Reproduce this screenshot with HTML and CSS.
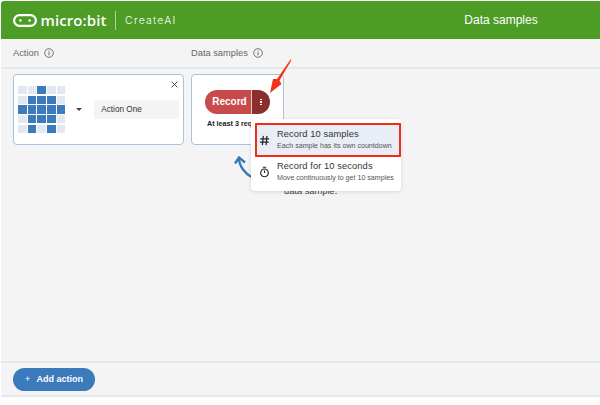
FILE: index.html
```html
<!DOCTYPE html>
<html lang="en">
<head>
<meta charset="utf-8">
<title>micro:bit CreateAI</title>
<link rel="stylesheet" href="styles.css">
</head>
<body>
<div class="app">
  <header class="topbar">
    <div class="brand">
      <svg class="logo-mark" viewBox="0 0 24 13" width="24" height="13" aria-hidden="true">
        <rect x="1.1" y="1.1" width="21.8" height="10.8" rx="5.4" fill="none" stroke="#fff" stroke-width="2.2"/>
        <circle cx="7.4" cy="6.5" r="1.2" fill="#fff"/>
        <circle cx="16.6" cy="6.5" r="1.2" fill="#fff"/>
      </svg>
      <span class="logo-text">micro:bit</span>
      <span class="brand-sep"></span>
      <span class="product">CreateAI</span>
    </div>
    <div class="page-title">Data samples</div>
  </header>

  <div class="columns-head">
    <div class="col-action">Action
      <svg class="info" viewBox="0 0 10 10" width="10" height="10" aria-hidden="true"><circle cx="5" cy="5" r="4.3" fill="none" stroke="#555" stroke-width=".8"/><rect x="4.55" y="4.3" width=".9" height="3" fill="#555"/><rect x="4.55" y="2.6" width=".9" height=".9" fill="#555"/></svg>
    </div>
    <div class="col-data">Data samples
      <svg class="info" viewBox="0 0 10 10" width="10" height="10" aria-hidden="true"><circle cx="5" cy="5" r="4.3" fill="none" stroke="#555" stroke-width=".8"/><rect x="4.55" y="4.3" width=".9" height="3" fill="#555"/><rect x="4.55" y="2.6" width=".9" height=".9" fill="#555"/></svg>
    </div>
  </div>

  <main class="content">
    <div class="row">
      <section class="card action-card">
        <div class="led-grid">
          <i></i><i></i><i class="on"></i><i></i><i></i>
          <i></i><i class="on"></i><i class="on"></i><i class="on"></i><i></i>
          <i class="on"></i><i class="on"></i><i class="on"></i><i class="on"></i><i class="on"></i>
          <i></i><i class="on"></i><i class="on"></i><i class="on"></i><i></i>
          <i></i><i class="on"></i><i></i><i class="on"></i><i></i>
        </div>
        <span class="caret"></span>
        <div class="name-input">Action One</div>
        <svg class="close" viewBox="0 0 8 8" width="7" height="7" aria-hidden="true"><path d="M.7.7l6.6 6.6M7.3.7L.7 7.3" stroke="#333" stroke-width="1" fill="none"/></svg>
      </section>
      <section class="card data-card">
        <div class="record-btn">
          <span class="record-main">Record</span>
          <span class="record-more"><b></b><b></b><b></b></span>
        </div>
        <div class="req">At least 3 required</div>
      </section>
    </div>

    <svg class="hint-arrow" viewBox="0 0 40 40" width="40" height="40" aria-hidden="true">
      <path d="M5 2 C5 10 11 18 19 22" fill="none" stroke="#3a7ab8" stroke-width="2.4"/>
      <path d="M1 7.5 L5 1.5 L11 6.5" fill="none" stroke="#3a7ab8" stroke-width="2.4"/>
    </svg>
    <div class="hint-text">data sample.</div>

    <div class="menu">
      <div class="menu-item selected">
        <svg class="menu-icon" viewBox="0 0 12 12" width="11" height="11" aria-hidden="true"><path d="M4.7 1L3.7 11M8.7 1L7.7 11M1.4 4.2H11M1 7.8H10.6" stroke="#222" stroke-width="1.3" fill="none"/></svg>
        <div><div class="menu-title">Record 10 samples</div><div class="menu-sub">Each sample has its own countdown</div></div>
      </div>
      <div class="menu-item">
        <svg class="menu-icon" viewBox="0 0 12 12" width="11" height="12" aria-hidden="true"><circle cx="6" cy="7" r="4.2" fill="none" stroke="#222" stroke-width="1.2"/><path d="M4.2.8H7.8M6 4.4V7" stroke="#222" stroke-width="1.2" fill="none"/></svg>
        <div><div class="menu-title">Record for 10 seconds</div><div class="menu-sub">Move continuously to get 10 samples</div></div>
      </div>
    </div>

    <svg class="red-arrow" viewBox="0 0 30 42" width="30" height="42" aria-hidden="true">
      <path d="M25.5 1 L13.5 21.5 L15.5 25 L4 34 L7 20 L11 20 L24.5 .5 Z" fill="#f4321a"/>
    </svg>
  </main>

  <footer class="actions-bar">
    <div class="add-btn"><span class="plus">+</span> Add action</div>
  </footer>
  <div class="bottom-strip"></div>
</div>
</body>
</html>
```
FILE: styles.css
```css
* { box-sizing: border-box; }
html, body { margin: 0; height: 100%; background: #fff; }
body { font-family: "Liberation Sans", Arial, sans-serif; overflow: hidden; }
.app { height: 405px; width: 600px; padding: 1px 0 0 1px; display: flex; flex-direction: column; background: #fff; }

.topbar { height: 38px; flex: none; background: #4c9c25; color: #fff; display: flex; align-items: center; border-radius: 3px 0 0 0; }
.brand { display: flex; align-items: center; width: 433px; padding-left: 12px; }
.logo-mark { flex: none; margin-right: 3.5px; }
.logo-text { font-family: "Open Sans", sans-serif; font-weight: 600; font-size: 15px; letter-spacing: .1px; line-height: 1; }
.brand-sep { width: 1px; height: 19px; background: rgba(255,255,255,.55); margin: 0 9.5px 0 8px; }
.product { font-family: "Inter", sans-serif; font-weight: 300; font-size: 10.5px; letter-spacing: 1.2px; }
.page-title { width: 134px; text-align: center; font-size: 12px; }

.columns-head { height: 30px; flex: none; background: #f4f4f4; border-bottom: 2px solid #e4e8ee; display: flex; align-items: center; padding: 0 0 1px 12px; font-size: 9.3px; color: #666; }
.col-action { width: 178px; display: flex; align-items: center; gap: 5px; }
.col-data { display: flex; align-items: center; gap: 5px; }

.content { flex: 1; background: #f4f4f4; position: relative; padding: 5px 0 0 12px; min-height: 0; }
.row { display: flex; gap: 7px; }
.card { height: 71px; background: #fff; border: 1px solid #a9c3dc; border-radius: 4px; position: relative; }
.action-card { width: 171px; display: flex; align-items: center; padding: 0 4px; }
.led-grid { display: grid; grid-template-columns: repeat(5, 8.5px); grid-auto-rows: 8.5px; gap: 1.2px; }
.led-grid i { background: #e3e8f0; display: block; }
.led-grid i.on { background: #3b7abb; }
.caret { width: 0; height: 0; border-left: 3px solid transparent; border-right: 3px solid transparent; border-top: 3px solid #444; margin: 0 12px 0 11px; }
.name-input { width: 85px; height: 19px; background: #f4f4f4; border-radius: 2px; font-size: 8.2px; color: #333; line-height: 19px; padding-left: 7px; }
.close { position: absolute; top: 6px; right: 5px; }

.data-card { width: 93px; display: flex; flex-direction: column; align-items: center; overflow: hidden; padding-top: 15px; }
.record-btn { display: flex; width: 65px; height: 24px; border-radius: 12px; overflow: hidden; color: #fff; flex: none; }
.record-main { flex: 1; background: #c84a4a; font-weight: bold; font-size: 10px; line-height: 24px; text-align: center; padding-left: 3px; }
.record-more { width: 19px; background: #8a2f2e; border-left: 1px solid #e9c9c9; display: flex; flex-direction: column; align-items: center; justify-content: center; gap: 1px; }
.record-more b { width: 1.4px; height: 1.4px; background: #fff; display: block; }
.req { align-self: flex-start; margin: 5px 0 0 15px; font-size: 7.2px; font-weight: bold; color: #222; white-space: nowrap; }

.hint-arrow { position: absolute; left: 233px; top: 87px; }
.hint-text { position: absolute; left: 283px; top: 117px; font-size: 9.3px; color: #444; }

.menu { position: absolute; left: 250px; top: 50px; width: 150px; height: 72px; background: #fff; border-radius: 4px; box-shadow: 0 1px 4px rgba(0,0,0,.12); padding-top: 5px; }
.menu-item { height: 32px; display: flex; align-items: center; gap: 7px; padding-left: 5px; }
.menu-item.selected { background: #e9edf5; outline: 2px solid #f02d17; outline-offset: -1px; margin-left: 5px; margin-right: 1px; padding-left: 0; }
.menu-icon { flex: none; margin-left: 3px; }
.menu-title { font-size: 9.3px; color: #333; line-height: 12px; white-space: nowrap; letter-spacing: .1px; }
.menu-sub { font-size: 7.1px; color: #555; line-height: 12px; white-space: nowrap; }
.red-arrow { position: absolute; left: 265px; top: -10px; }

.actions-bar { height: 36px; flex: none; background: #f4f4f4; border-top: 2px solid #e4e8ee; border-bottom: 2px solid #e4e8ee; padding: 5px 0 0 12px; }
.add-btn { width: 82px; height: 23px; background: #3b7abb; color: #fff; border-radius: 12px; font-size: 9px; font-weight: bold; line-height: 23px; padding-left: 12px; white-space: nowrap; }
.plus { font-weight: normal; margin-right: 4px; }
.bottom-strip { height: 8px; flex: none; background: #fff; }
```
